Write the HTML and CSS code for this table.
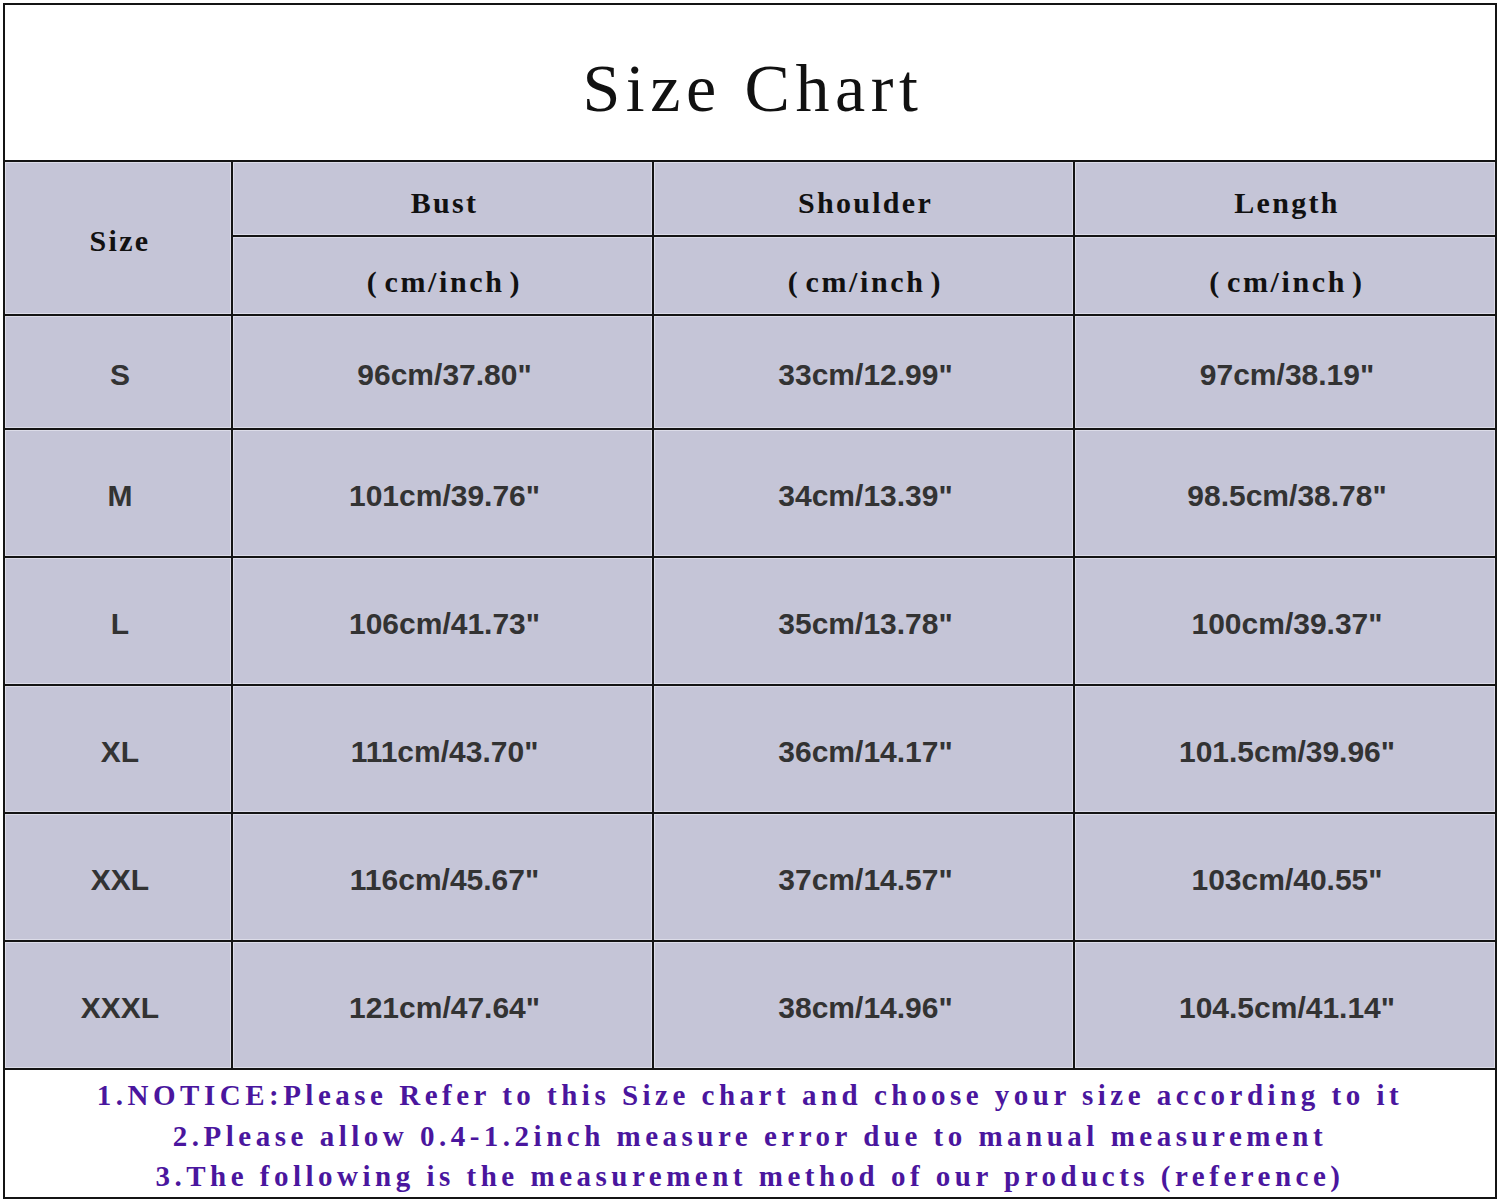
FILE: index.html
```html
<!DOCTYPE html>
<html lang="en">
<head>
<meta charset="utf-8">
<title>Size Chart</title>
<link rel="stylesheet" href="styles.css">
</head>
<body>
<div class="sheet">
  <div class="title">Size Chart</div>
  <div class="grid">
    <div class="cell head size-head">Size</div>
    <div class="cell head">Bust</div>
    <div class="cell head">Shoulder</div>
    <div class="cell head">Length</div>
    <div class="cell head unit">(&#8202;cm/inch&#8202;)</div>
    <div class="cell head unit">(&#8202;cm/inch&#8202;)</div>
    <div class="cell head unit">(&#8202;cm/inch&#8202;)</div>

    <div class="cell val">S</div>
    <div class="cell val">96cm/37.80"</div>
    <div class="cell val">33cm/12.99"</div>
    <div class="cell val">97cm/38.19"</div>

    <div class="cell val">M</div>
    <div class="cell val">101cm/39.76"</div>
    <div class="cell val">34cm/13.39"</div>
    <div class="cell val">98.5cm/38.78"</div>

    <div class="cell val">L</div>
    <div class="cell val">106cm/41.73"</div>
    <div class="cell val">35cm/13.78"</div>
    <div class="cell val">100cm/39.37"</div>

    <div class="cell val">XL</div>
    <div class="cell val">111cm/43.70"</div>
    <div class="cell val">36cm/14.17"</div>
    <div class="cell val">101.5cm/39.96"</div>

    <div class="cell val">XXL</div>
    <div class="cell val">116cm/45.67"</div>
    <div class="cell val">37cm/14.57"</div>
    <div class="cell val">103cm/40.55"</div>

    <div class="cell val">XXXL</div>
    <div class="cell val">121cm/47.64"</div>
    <div class="cell val">38cm/14.96"</div>
    <div class="cell val">104.5cm/41.14"</div>
  </div>
  <div class="notes">
    <p>1.NOTICE:Please Refer to this Size chart and choose your size according to it</p>
    <p>2.Please allow 0.4-1.2inch measure error due to manual measurement</p>
    <p>3.The following is the measurement method of our products (reference)</p>
  </div>
</div>
</body>
</html>
```
FILE: styles.css
```css
html, body {
  margin: 0;
  padding: 0;
  background: #ffffff;
}

.sheet {
  box-sizing: border-box;
  width: 1494px;
  margin: 3px 0 0 3px;
  border: 2px solid #141414;
  background: #ffffff;
}

.title {
  height: 157px;
  border-bottom: 2px solid #141414;
  display: flex;
  align-items: center;
  justify-content: center;
  padding: 12px 0 0 6px;
  box-sizing: border-box;
  font-family: "Liberation Serif", "Times New Roman", serif;
  font-size: 68px;
  letter-spacing: 5.6px;
  color: #111;
}

.grid {
  display: grid;
  grid-template-columns: 226px 419px 419px 1fr;
  grid-template-rows: 73px 77px 112px repeat(5, 126px);
  gap: 2px;
  background: #141414;
}

.cell {
  background: #c5c5d7;
  box-shadow: inset 0 0 0 1px #dcdce8;
  display: flex;
  align-items: center;
  justify-content: center;
  box-sizing: border-box;
}

.head {
  font-family: "Liberation Serif", "Times New Roman", serif;
  font-weight: bold;
  font-size: 30px;
  letter-spacing: 2.3px;
  color: #111;
  padding: 8px 0 0 4px;
}

.size-head {
  grid-row: span 2;
  padding-top: 6px;
}

.unit {
  padding-top: 12px;
  letter-spacing: 2.6px;
}

.val {
  font-family: "Liberation Sans", Arial, sans-serif;
  font-weight: bold;
  font-size: 30px;
  color: #333333;
  padding: 6px 0 0 4px;
}

.notes {
  border-top: 2px solid #141414;
  height: 129px;
  box-sizing: border-box;
  padding-top: 5px;
  text-align: center;
  font-family: "Liberation Serif", "Times New Roman", serif;
  font-weight: bold;
  font-size: 29px;
  letter-spacing: 4.5px;
  line-height: 40.5px;
  color: #4a169e;
}

.notes p {
  margin: 0;
}
```
